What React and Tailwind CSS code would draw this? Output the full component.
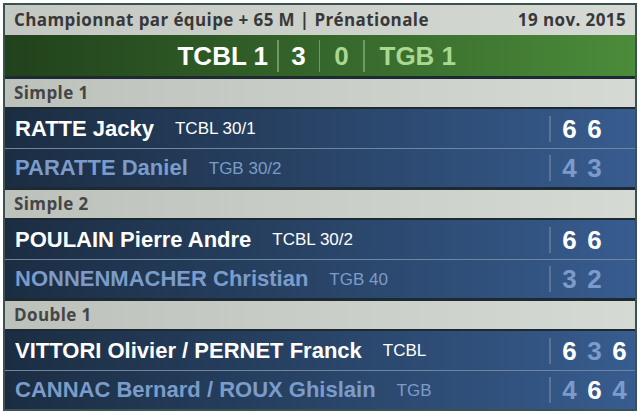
import React from "react";

const sections = [
  {
    title: "Simple 1",
    rows: [
      { name: "RATTE Jacky", club: "TCBL 30/1", win: true, sets: [[6, true], [6, true]] },
      { name: "PARATTE Daniel", club: "TGB 30/2", win: false, sets: [[4, false], [3, false]] },
    ],
  },
  {
    title: "Simple 2",
    rows: [
      { name: "POULAIN Pierre Andre", club: "TCBL 30/2", win: true, sets: [[6, true], [6, true]] },
      { name: "NONNENMACHER Christian", club: "TGB 40", win: false, sets: [[3, false], [2, false]] },
    ],
  },
  {
    title: "Double 1",
    rows: [
      { name: "VITTORI Olivier / PERNET Franck", club: "TCBL", win: true, sets: [[6, true], [3, false], [6, true]] },
      { name: "CANNAC Bernard / ROUX Ghislain", club: "TGB", win: false, sets: [[4, false], [6, true], [4, false]] },
    ],
  },
];

const arial = { fontFamily: '"Liberation Sans", Arial, sans-serif' };
const sans = { fontFamily: '"Open Sans", "Noto Sans", sans-serif' };

function Row({ r, first }) {
  return (
    <div
      className={`flex items-center bg-gradient-to-r from-[#1b2d42] to-[#375c8f] ${first ? "h-[39px]" : "h-[38px]"}`}
    >
      <div className="flex-1 flex items-center pl-[10px]" style={arial}>
        <span className={`text-[22px] font-bold leading-none ${r.win ? "text-white" : "text-[#7b9cca]"}`}>
          {r.name}
        </span>
        <span className={`ml-[21px] text-[17px] leading-none ${r.win ? "text-white" : "text-[#7b9cca]"}`}>
          {r.club}
        </span>
      </div>
      <div className="w-[86px] flex items-center h-full">
        <div className="w-[2px] h-[26px] bg-[#5b7596]" />
        <div className="flex ml-[6px]">
          {r.sets.map(([v, w], i) => (
            <span
              key={i}
              className={`w-[25px] text-center text-[26px] font-bold leading-none ${w ? "text-white" : "text-[#7b9cca]"}`}
              style={arial}
            >
              {v}
            </span>
          ))}
        </div>
      </div>
    </div>
  );
}

export default function App() {
  return (
    <div className="w-[640px] h-[412px] bg-white pt-[3px] pl-[3px]">
      <div className="w-[634px] h-[408px] border-2 border-[#3b5250] bg-[#1d2a31] flex flex-col overflow-hidden">
        <div
          className="h-[30px] shrink-0 flex items-center justify-between px-[9px] bg-gradient-to-r from-[#c3c8c2] to-[#d5dad5] text-[#383838] text-[17px] tracking-[0.4px] font-bold"
          style={sans}
        >
          <span>Championnat par équipe + 65 M | Prénationale</span>
          <span>19 nov. 2015</span>
        </div>
        <div className="h-[41px] shrink-0 flex items-center bg-gradient-to-r from-[#21421c] to-[#4b8c3a]" style={arial}>
          <div className="w-[263px] text-right text-white text-[26px] font-bold leading-none">TCBL 1</div>
          <div className="ml-[9px] w-[1.5px] h-[32px] bg-[#6e9b5f]" />
          <div className="w-[40px] text-center text-white text-[26px] font-bold leading-none">3</div>
          <div className="w-[1.5px] h-[32px] bg-[#6e9b5f]" />
          <div className="w-[43px] text-center text-[#a9d893] text-[26px] font-bold leading-none">0</div>
          <div className="w-[1.5px] h-[32px] bg-[#6e9b5f]" />
          <div className="ml-[15px] text-[#a9d893] text-[26px] font-bold leading-none">TGB 1</div>
        </div>
        {sections.map((s) => (
          <div key={s.title} className="flex flex-col mt-[3px]">
            <div
              className="h-[28px] flex items-center px-[9px] bg-gradient-to-r from-[#bcc1bb] to-[#d5dad5] text-[#454545] text-[17px] tracking-[0.4px] font-bold"
              style={sans}
            >
              {s.title}
            </div>
            <div className="mt-[2px] flex flex-col">
              <Row r={s.rows[0]} first />
              <div className="h-[1px] bg-[#6f86a3]" />
              <Row r={s.rows[1]} />
            </div>
          </div>
        ))}
      </div>
    </div>
  );
}
